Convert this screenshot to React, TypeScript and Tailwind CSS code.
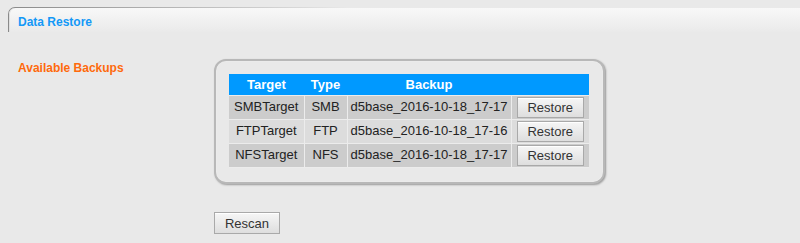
import React from 'react';

const backups = [
  { target: 'SMBTarget', type: 'SMB', backup: 'd5base_2016-10-18_17-17' },
  { target: 'FTPTarget', type: 'FTP', backup: 'd5base_2016-10-18_17-16' },
  { target: 'NFSTarget', type: 'NFS', backup: 'd5base_2016-10-18_17-17' }
];

function GrayButton({ label, className }: { label: string; className?: string }) {
  return (
    <button
      className={`h-[21px] border border-[#a9a9a9] bg-[linear-gradient(to_bottom,#f6f6f6,#dedede)] text-[13px] leading-none text-[#333] shadow-[inset_0_1px_0_#fff] ${className ?? ''}`}
    >
      {label}
    </button>
  );
}

export default function App() {
  return (
    <div className="h-[243px] w-full bg-[#e9e9e9] font-['Liberation_Sans',Arial,sans-serif] text-[13px] text-[#222] overflow-hidden">
      {/* title tab */}
      <div className="ml-2 mt-[7px] rounded-tl-[7px] pt-px pl-px bg-[linear-gradient(to_right,#8a8a8a_0px,#b4b4b4_160px,#d8d8d8_290px,#e9e9e9_340px)]">
        <div className="flex h-[24px] items-center rounded-tl-[6px] bg-[linear-gradient(to_bottom,#f8f8f8,#eaeaea)] pl-[9px] pt-[3px] shadow-[inset_1px_0_0_#e0e0e0]">
          <span className="text-[12px] font-bold text-[#1499f7]">Data Restore</span>
        </div>
      </div>

      <div className="mt-[27px] flex">
        <div className="w-[214px] pl-[18px] text-[12px] font-bold text-[#ff6a0c]">
          Available Backups
        </div>

        <div className="flex flex-col">
          <div className="h-[125px] w-[391px] rounded-[12px] border-2 border-[#b8b8b8] bg-[#e9e9e9] pl-[13px] pt-[13px] shadow-[1px_1px_2px_#9a9a9a,inset_0_0_1px_#fff]">
            <table className="w-[360px] border-collapse text-center">
              <thead>
                <tr className="h-[21px] bg-[#0099ff] text-white font-bold">
                  <th className="w-[75px] font-bold">Target</th>
                  <th className="w-[43px] font-bold">Type</th>
                  <th className="w-[164px] font-bold">Backup</th>
                  <th className="w-[78px]"></th>
                </tr>
              </thead>
              <tbody>
                {backups.map((b, i) => (
                  <tr
                    key={b.target}
                    className={`h-[24px] ${i % 2 === 1 ? 'bg-[#dcdcdc]' : 'bg-[#cccccc]'}`}
                  >
                    <td className="border border-[#ececec] border-l-0">{b.target}</td>
                    <td className="border border-[#ececec]">{b.type}</td>
                    <td className="border border-[#ececec]">{b.backup}</td>
                    <td className="border border-[#ececec] border-r-0 px-[4px]">
                      <GrayButton label="Restore" className="w-[67px]" />
                    </td>
                  </tr>
                ))}
              </tbody>
            </table>
          </div>

          <div className="mt-[28px]">
            <GrayButton label="Rescan" className="w-[66px] h-[22px]" />
          </div>
        </div>
      </div>
    </div>
  );
}
